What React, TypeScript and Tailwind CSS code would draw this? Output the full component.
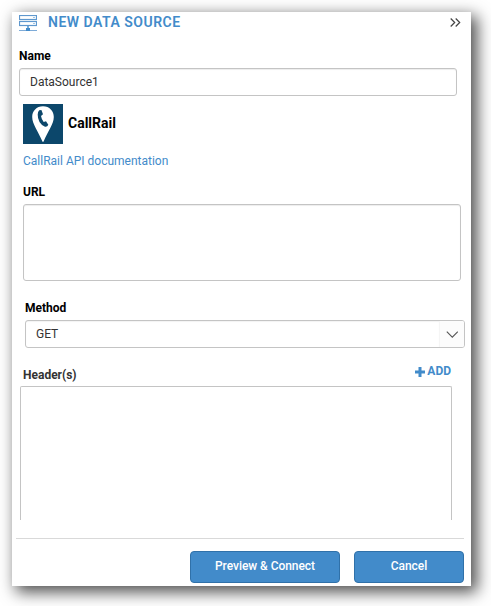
import React from "react";

function ServerIcon() {
  return (
    <svg className="mt-[3px] ml-[7px] h-[17px] w-[18px] shrink-0" viewBox="0 0 18 17" fill="none">
      <rect x="0.5" y="0.5" width="17" height="4" stroke="#5f98ce" strokeWidth="1.200" />
      <rect x="0.5" y="6.500" width="17" height="4" stroke="#5f98ce" strokeWidth="1.200" />
      <path d="M14.500 2h1v1h-1zM14.500 8h1v1h-1z" fill="#428bca" />
      <path d="M8.300 11h1.400v2H11v3H7v-3h1.300z" fill="#428bca" />
      <path d="M0 15h7v1H0zM11 15h7v1h-7z" fill="#7eabd8" />
    </svg>
  );
}

function CallRailLogo() {
  return (
    <svg className="h-10 w-10 shrink-0" viewBox="0 0 40 40">
      <rect width="40" height="40" fill="#0c476b" />
      <path d="M20 2.200C13.500 2.200 9.200 7 9.200 13C9.200 20 15.500 28 19.200 37Q20 39 20.800 37C24.500 28 30.800 20 30.800 13C30.800 7 26.500 2.200 20 2.200Z" fill="#fff" />
      <path d="M16.200 6.300L18.400 6L20 10.300L18 11.900Q18.600 15.500 20.700 18L23 17.200L25.300 20.800Q24.300 23.200 22 22.700Q18.700 21.600 16.500 18Q14.600 14.300 14.700 10.500Q14.800 7.500 16.200 6.300Z" fill="#0c476b" />
    </svg>
  );
}

export default function App() {
  return (
    <div className="h-[606px] w-[491px] overflow-hidden bg-white pt-3 pl-3 font-[Roboto,'Liberation_Sans',sans-serif] text-xs leading-4 text-[#333]">
      <main className="flex h-[574px] w-[459px] flex-col bg-white shadow-[5px_5px_15px_1px_rgba(0,0,0,0.7)]">
        <header className="flex h-9 shrink-0 items-start">
          <ServerIcon />
          <h1 className="ml-[11px] text-sm leading-5 font-semibold tracking-[0.5px] whitespace-nowrap text-[#428bca]">NEW DATA SOURCE</h1>
          <svg className="mt-[6px] mr-[10px] ml-auto h-[9px] w-[11px]" viewBox="0 0 11 9" fill="none" stroke="#444" strokeWidth="1.2">
            <path d="M0.700 0.500L4.700 4.500L0.700 8.500M5.700 0.500L9.700 4.500L5.700 8.500" />
          </svg>
        </header>

        <label className="ml-[7px] flex h-5 shrink-0 items-start font-bold text-black">Name</label>
        <input
          defaultValue="DataSource1"
          className="ml-[7px] h-7 w-[438px] shrink-0 rounded-[3px] border border-[#c4c4c4] bg-white px-[10px] text-xs text-[#333] shadow-[inset_0_1px_1px_rgba(0,0,0,0.075)] outline-none"
        />

        <div className="mt-2 ml-[11px] flex h-10 shrink-0 items-center gap-[5px]">
          <CallRailLogo />
          <span className="pb-[2px] text-sm font-bold text-black">CallRail</span>
        </div>
        <a className="mt-[9px] ml-[11px] shrink-0 text-[#428bca]">CallRail API documentation</a>

        <label className="mt-[15px] ml-[11px] h-5 shrink-0 font-bold text-black">URL</label>
        <textarea className="ml-[11px] h-[77px] w-[438px] shrink-0 resize-none rounded-[3px] border border-[#c4c4c4] bg-white shadow-[inset_0_1px_1px_rgba(0,0,0,0.075)] outline-none" />

        <label className="mt-[19px] ml-[13px] h-5 shrink-0 font-bold text-black">Method</label>
        <div className="ml-[13px] flex h-7 w-[440px] shrink-0 items-center overflow-hidden rounded-[3px] border border-[#c4c4c4]">
          <span className="flex h-full flex-1 items-center pl-[10px] shadow-[inset_0_1px_1px_rgba(0,0,0,0.05)]">GET</span>
          <span className="flex h-full w-[25px] items-center justify-center border-l border-[#f5f5f5] bg-[#fcfcfc]">
            <svg className="h-[7px] w-3" viewBox="0 0 12 7" fill="none" stroke="#555" strokeWidth="1.1">
              <path d="M0.800 0.700L6.300 6.200L11.800 0.700" />
            </svg>
          </span>
        </div>

        <div className="mt-[15px] ml-[11px] flex h-[23px] w-[428px] shrink-0 items-start justify-between">
          <span className="mt-1 font-bold">Header(s)</span>
          <button className="flex items-center gap-[2px] font-bold text-[#428bca]">
            <svg className="mt-[2px] h-[10px] w-[10px]" viewBox="0 0 10 10" fill="currentColor">
              <path d="M3.500 0h3v3.500H10v3H6.500V10h-3V6.500H0v-3h3.500z" />
            </svg>
            ADD
          </button>
        </div>
        <div className="ml-2 h-[134px] w-[432px] shrink-0 rounded-t-[2px] border border-b-0 border-[#c4c4c4]" />

        <footer className="mt-[18px] ml-1 flex w-[448px] shrink-0 justify-end gap-[14px] border-t border-[#d9d9d9] pt-3">
          <button className="h-8 w-[150px] shrink-0 rounded-[4px] border border-[#3071a9] bg-[#428bca] pb-[2px] font-medium tracking-[-0.05px] text-white">Preview &amp; Connect</button>
          <button className="h-8 w-[110px] shrink-0 rounded-[4px] border border-[#3071a9] bg-[#428bca] pb-[2px] font-medium text-white">Cancel</button>
        </footer>
      </main>
    </div>
  );
}
